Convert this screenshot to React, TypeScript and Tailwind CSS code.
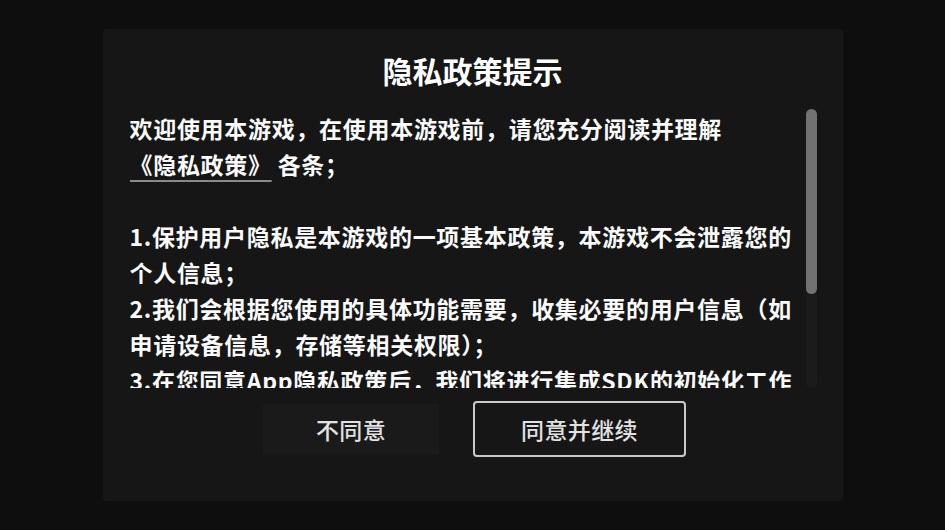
import React from "react";

const font = { fontFamily: '"Noto Sans CJK SC", "Noto Sans", sans-serif' };

export default function App() {
  return (
    <div
      className="w-[945px] h-[530px] bg-[#0e0e0e] flex items-center justify-center overflow-hidden"
      style={font}
    >
      <div className="w-[740px] h-[472px] bg-[#161616] rounded-[3px] flex flex-col">
        <h1 className="pt-[23px] h-[80px] text-center text-[30px] leading-[36px] font-bold text-white">
          隐私政策提示
        </h1>
        <div className="flex h-[279px] pl-[27px] pr-[26px]">
          <div className="flex-1 overflow-hidden pt-[1px] text-[23px] leading-[36px] font-bold text-[#fafafa] tracking-[0.7px] whitespace-nowrap">
            欢迎使用本游戏，在使用本游戏前，请您充分阅读并理解
            <br />
            <span className="underline decoration-[#8a8a8a] decoration-2 underline-offset-[6px]">
              《隐私政策》
            </span>{" "}
            各条；
            <br />
            <br />
            1.保护用户隐私是本游戏的一项基本政策，本游戏不会泄露您的
            <br />
            个人信息；
            <br />
            2.我们会根据您使用的具体功能需要，收集必要的用户信息（如
            <br />
            申请设备信息，存储等相关权限）；
            <br />
            3.在您同意App隐私政策后，我们将进行集成SDK的初始化工作
            <br />
            ，会收集您的设备信息，用于保障服务的安全运行。
          </div>
          <div className="w-[11px] h-[279px] rounded-full bg-[#1b1b1b] flex flex-col">
            <div className="h-[185px] rounded-full bg-[#727272]" />
          </div>
        </div>
        <div className="mt-[13px] pl-[4px] flex items-center justify-center gap-[34px] h-[56px]">
          <button className="w-[176px] h-[50px] bg-[#1a1a1a] text-[#e2e2e2] text-[23px] leading-[30px] font-medium tracking-[0.4px]">
            不同意
          </button>
          <button className="w-[213px] h-[56px] border-2 border-[#c9c9c9] rounded-[4px] text-[#e2e2e2] text-[23px] leading-[30px] font-medium tracking-[0.4px]">
            同意并继续
          </button>
        </div>
      </div>
    </div>
  );
}
